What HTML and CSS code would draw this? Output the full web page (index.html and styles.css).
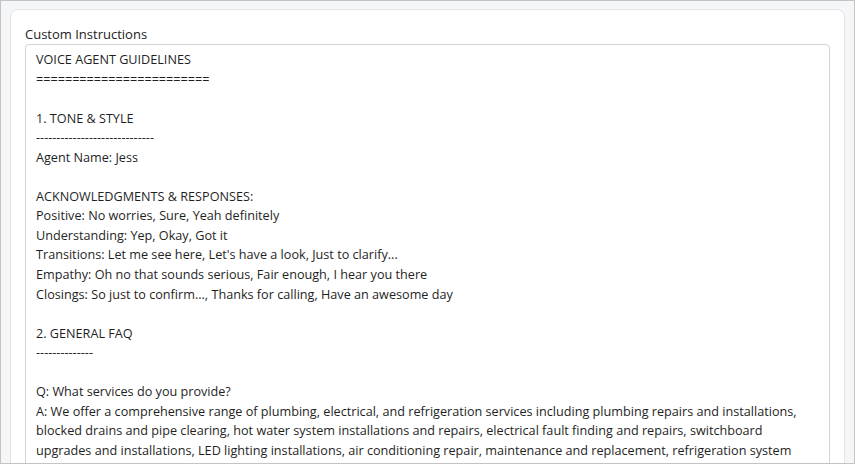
FILE: index.html
```html
<!DOCTYPE html>
<html lang="en">
<head>
<meta charset="utf-8">
<title>Custom Instructions</title>
<link rel="stylesheet" href="styles.css">
</head>
<body>
<div class="frame">
  <section class="card">
    <label class="label" for="instr">Custom Instructions</label>
    <div class="editor" id="instr">VOICE AGENT GUIDELINES
========================

1. TONE &amp; STYLE
-----------------------------
Agent Name: Jess

ACKNOWLEDGMENTS &amp; RESPONSES:
Positive: No worries, Sure, Yeah definitely
Understanding: Yep, Okay, Got it
Transitions: Let me see here, Let's have a look, Just to clarify...
Empathy: Oh no that sounds serious, Fair enough, I hear you there
Closings: So just to confirm..., Thanks for calling, Have an awesome day

2. GENERAL FAQ
--------------

Q: What services do you provide?
A: We offer a comprehensive range of plumbing, electrical, and refrigeration services including plumbing repairs and installations, blocked drains and pipe clearing, hot water system installations and repairs, electrical fault finding and repairs, switchboard upgrades and installations, LED lighting installations, air conditioning repair, maintenance and replacement, refrigeration system</div>
  </section>
</div>
</body>
</html>
```

FILE: styles.css
```css
html, body {
  margin: 0;
  padding: 0;
  overflow: hidden;
}

body {
  font-family: "Open Sans", "Liberation Sans", sans-serif;
  font-size: 13px;
  line-height: 19.5px;
  color: #222;
}

.frame {
  box-sizing: border-box;
  width: 855px;
  height: 464px;
  border: 1px solid #c4c4c4;
  background: #f5f6f8;
  padding: 8px 9px 0 9px;
  overflow: hidden;
}

.card {
  background: #fff;
  border: 1px solid #e2e4e8;
  border-radius: 8px;
  padding: 15px 14px 20px 14px;
  height: 600px;
  box-sizing: border-box;
}

.label {
  display: block;
  line-height: 19px;
  color: #222;
}

.editor {
  border: 1px solid #d1d5db;
  border-radius: 4px;
  padding: 5px 10px;
  white-space: pre-wrap;
  font-size: 12.65px;
  line-height: 19.55px;
  color: #1f1f1f;
  height: 500px;
  overflow: hidden;
}
```
